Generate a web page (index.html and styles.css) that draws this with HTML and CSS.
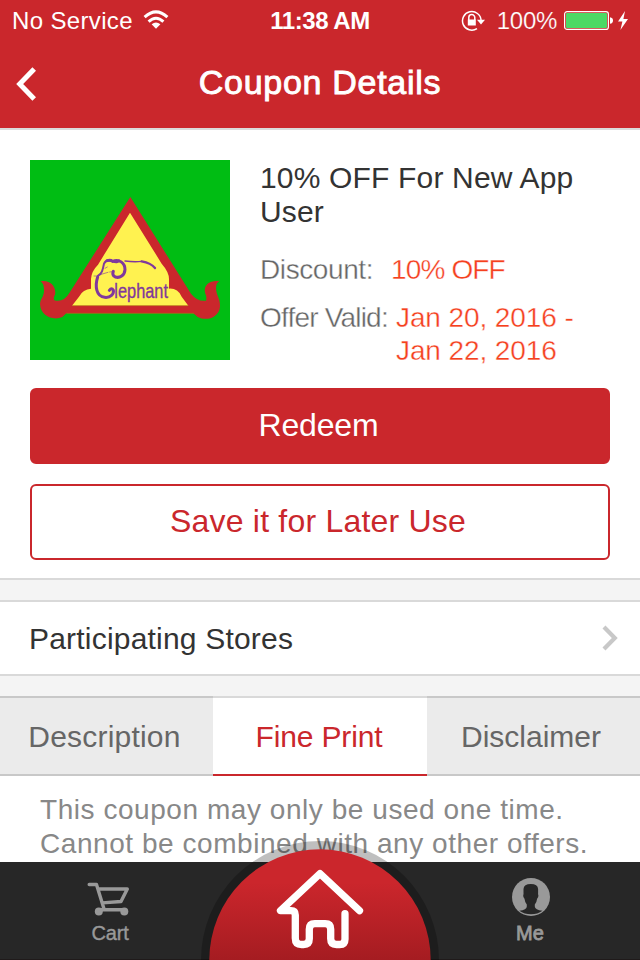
FILE: index.html
```html
<!DOCTYPE html>
<html lang="en">
<head>
<meta charset="utf-8">
<title>Coupon Details</title>
<link rel="stylesheet" href="styles.css">
</head>
<body>
<div class="phone">
  <header class="header">
    <div class="status">
      <div class="status-left">
        <span class="carrier">No Service</span>
        <svg class="wifi" width="26" height="20" viewBox="0 0 26 20" fill="none" stroke="#fff" stroke-width="3">
          <path d="M1.6 7.2Q13-3.6 24.4 7.2"/>
          <path d="M5.6 11.6Q13 4.8 20.4 11.6"/>
          <path d="M8.6 14.3Q13 10.6 17.4 14.3L13 18.8Z" fill="#fff" stroke="none"/>
        </svg>
      </div>
      <span class="clock">11:38 AM</span>
      <div class="status-right">
        <svg width="24" height="22" viewBox="0 0 24 22" fill="none" stroke="#fff" stroke-width="1.5">
          <path d="M20.1 10.5A9.3 9.3 0 1 0 16 18.6"/>
          <path d="M16 9.8H24L20 14.4Z" fill="#fff" stroke="none"/>
          <path d="M7.8 10V7.6a3 3 0 0 1 6 0V10"/>
          <path d="M6.8 9.5h8v6h-8Z" fill="#fff" stroke="none"/>
        </svg>
        <span class="percent">100%</span>
        <svg width="66" height="22" viewBox="0 0 66 22">
          <rect x=".6" y="1.6" width="43.8" height="17.8" rx="2.5" fill="none" stroke="#fff" stroke-width="1.2"/>
          <rect x="2" y="3" width="41" height="15" rx="1" fill="#4cd964"/>
          <path d="M46 7.2q3 .5 3 3.3t-3 3.3Z" fill="#fff"/>
          <path d="M61 1 54 11.6h4.4L56.4 20 64 9h-4.6Z" fill="#fff"/>
        </svg>
      </div>
    </div>
    <div class="navbar">
      <svg class="back" width="22" height="34" viewBox="0 0 22 34" fill="none" stroke="#fff" stroke-width="5"><path d="M19.2 2 4.7 17l14.500 15"/></svg>
      <h1>Coupon Details</h1>
    </div>
  </header>

  <section class="coupon">
    <div class="summary">
      <svg class="logo" viewBox="15 15 600 600">
        <path fill="#00bd13" d="M15 15h600v600H15z"/>
        <path fill="#ca272c" d="M316 126 498 416Q518 441 543 437Q546 425 541 416C533 391 555 374 583 379Q570 386 574 409C577 425 586 434 585 455C582 487 545 500 518 486L505 475H124L112 486C85 498 47 484 45 448C46 430 58 425 57 405Q57 386 47 379C75 373 95 395 90 419Q84 428 88 436Q116 444 135 411Z"/>
        <path fill="#fff250" d="M315 173 410 326Q432 351 432 372V401Q458 399 470 425L490 452H141L162 425Q174 402 198 401V372Q199 349 219 329Z"/>
        <path d="M141 452H490M124 475H507" stroke="#b26b18" stroke-width="2"/>
        <g fill="none" stroke="#7f389d" stroke-linecap="round">
          <path stroke-width="6" d="M219 362Q227 359 231 349Q234 342 237 326Q244 311 263 319Q278 326 282 316"/>
          <path stroke-width="9" d="M246 317Q257 314 263 319C282 311 300 323 300 344C299 362 284 370 271 366Q260 360 265 349"/>
          <path stroke-width="4" d="M300 318Q329 322 350 319"/>
          <path stroke-width="7" d="M350 319Q378 324 390 339"/>
          <path stroke-width="9" d="M218 366C209 394 214 425 239 427C257 429 267 417 265 406Q260 397 253 406"/>
          <path stroke-width="3" stroke-opacity=".6" d="M207 363h14M240 340l7-4m-22 23 24-7m5-1 7-1"/>
        </g>
        <text class="logo-text" x="268" y="429" textLength="161" lengthAdjust="spacingAndGlyphs">lephant</text>
      </svg>
      <div class="info">
        <h2>10% OFF For New App User</h2>
        <div class="field"><span class="label discount">Discount:</span><span class="value off">10% OFF</span></div>
        <div class="field valid"><span class="label offer">Offer Valid:</span><span class="value">Jan 20, 2016 -<br>Jan 22, 2016</span></div>
      </div>
    </div>
    <div class="button primary">Redeem</div>
    <div class="button outline">Save it for Later Use</div>
  </section>

  <section class="stores">
    <span>Participating Stores</span>
    <svg width="18" height="26" viewBox="0 0 18 26" fill="none" stroke="#c8c8c8" stroke-width="4.2"><path d="M2 2 12.800 13 2 24"/></svg>
  </section>

  <nav class="tabs">
    <div class="tab description">Description</div>
    <div class="tab active">Fine Print</div>
    <div class="tab disclaimer">Disclaimer</div>
  </nav>
  <div class="print">This coupon may only be used one time.<br>Cannot be combined with any other offers.</div>

  <footer class="bottom">
    <div class="item cart">
      <svg width="44" height="36" viewBox="0 0 44 36" fill="none" stroke="#999" stroke-width="3.4" stroke-linecap="round" stroke-linejoin="round">
        <path d="M2.2 3.500h7.300l7.300 23.700M12 8h28.300L34 20.500l-18.500 1.400M13 28.800h25"/>
        <circle cx="11.800" cy="30.500" r="4" fill="#999" stroke="none"/><circle cx="37.300" cy="30.500" r="4" fill="#999" stroke="none"/>
      </svg>
      <span>Cart</span>
    </div>
    <div class="item me">
      <svg width="40" height="40" viewBox="0 0 40 40">
        <circle cx="20" cy="20" r="19" fill="#999"/>
        <path fill="#272727" d="M8.300 33.800Q15.800 32.800 15.800 29.500V27.500Q13.800 25 13.500 21.800Q12 21 12.200 18Q12.800 17.500 12.500 16V12Q12.800 7 19.800 7T27.100 12V16Q26.800 17.500 27.400 18Q27.600 21 26.100 21.800Q25.800 25 23.800 27.500V29.500Q24 32.800 31.500 33.800Q26.500 37.300 20 37.300T8.300 33.800Z"/>
      </svg>
      <span>Me</span>
    </div>
    <div class="home">
      <svg viewBox="0 0 240 120" width="240" height="120">
        <defs><linearGradient id="red" x1="0" y1="0" x2="0" y2="1"><stop offset=".3" stop-color="#cb262c"/><stop offset="1" stop-color="#a51c21"/></linearGradient></defs>
        <circle cx="120" cy="120" r="119" fill="#000" fill-opacity=".25"/>
        <path d="M9.300 120a110.700 110.700 0 0 1 221.400 0Z" fill="url(#red)"/>
        <path transform="translate(0 1.2)" d="M159.500 69.500 120 32.500 80.500 69.500H91q4.300 0 4.300 4.300V97q0 6.300 6.300 6.300h2q5.700 0 5.700-5.700V88q0-5.500 5.500-5.500h10.400q5.500 0 5.500 5.500v9.600q0 5.700 5.700 5.700h3.300q5.300 0 5.300-5.300V72.500" fill="none" stroke="#fff" stroke-width="7.300" stroke-linecap="round" stroke-linejoin="round"/>
      </svg>
    </div>
  </footer>
</div>
</body>
</html>
```
FILE: styles.css
```css
* { box-sizing: border-box; }
body { margin: 0; font-family: "Liberation Sans", Arial, sans-serif; background: #fff; }
.phone { width: 640px; height: 960px; display: flex; flex-direction: column; overflow: hidden; background: #f4f4f4; }
.phone > * { flex-shrink: 0; }
h1, h2 { margin: 0; font-weight: 400; }

.header { height: 130px; background: #ca272c; border-bottom: 2px solid #dbdbdb; color: #fff; }
.status { height: 40px; display: grid; grid-template-columns: 1fr auto 1fr; align-items: center; font-size: 24px; line-height: 40px; padding: 1px 11px 0 12px; }
.status-left, .status-right { display: flex; align-items: center; height: 40px; }
.carrier { letter-spacing: .35px; }
.wifi { margin-left: 10px; margin-top: -2px; }
.clock { font-weight: 700; letter-spacing: -.45px; margin-right: 1px; }
.status-right { justify-content: flex-end; }
.status-right svg { margin-top: -1px; }
.status-right svg:last-child { margin-right: -1px; }
.percent { margin: 0 7px 0 12px; letter-spacing: -.3px; -webkit-text-stroke: .2px #ca272c; }
.navbar { height: 88px; display: grid; grid-template-columns: 40px 1fr 40px; align-items: center; padding: 0 13px 0 15px; }
.navbar h1 { font-size: 34px; line-height: 40px; text-align: center; letter-spacing: .7px; margin-top: -4px; margin-right: 2px; -webkit-text-stroke: .9px #fff; }

.coupon { height: 450px; padding: 30px 30px 0; background: #fff; border-bottom: 2px solid #d9d9d9; }
.summary { display: flex; gap: 30px; height: 228px; }
.logo { width: 200px; height: 200px; flex: none; }
.logo-text { font-family: "Liberation Sans", sans-serif; font-size: 62px; fill: #7f389d; stroke: #7f389d; stroke-width: 1; }
.info { padding-top: 1px; flex: 1; }
h2 { font-size: 30px; line-height: 34px; color: #333; letter-spacing: .17px; width: 320px; margin-bottom: 24px; }
.field { display: flex; font-size: 28px; line-height: 33px; -webkit-text-stroke: .35px #fff; }
.label { color: #666; }
.value { color: #f5401e; white-space: nowrap; letter-spacing: -.1px; }
.discount { width: 131px; letter-spacing: -.4px; }
.off { letter-spacing: -.85px; }
.valid { margin-top: 15px; }
.offer { width: 136px; letter-spacing: -.8px; white-space: nowrap; }
.button { height: 76px; display: flex; align-items: center; justify-content: center; font-size: 32px; border-radius: 6px; padding: 0 4px 2px 0; border: 2px solid #ca272c; }
.primary { background: #ca272c; color: #fff; padding-right: 3px; letter-spacing: -.2px; }
.outline { margin-top: 20px; color: #ca272c; letter-spacing: .2px; }

.stores { height: 76px; margin: 20px 0; padding: 1px 20px 0 29px; background: #fff; border-top: 2px solid #d9d9d9; border-bottom: 2px solid #d9d9d9; display: flex; justify-content: space-between; align-items: center; font-size: 30px; color: #333; letter-spacing: .2px; }
.stores svg { margin-top: -1px; }

.tabs { height: 80px; display: grid; grid-template-columns: 213px 214px 213px; }
.tab { background: #ebebeb; border-top: 2px solid #c8c8c8; border-bottom: 2px solid #c8c8c8; display: flex; align-items: center; justify-content: center; font-size: 30px; color: #666; letter-spacing: 0; padding-top: 2px; }
.description { letter-spacing: .2px; padding-right: 4px; }
.disclaimer { padding-right: 5px; }
.active { background: #fff; color: #ca272c; border-top-color: #d9d9d9; border-bottom-color: #ca272c; letter-spacing: -.15px; padding-right: 2px; }
.print { height: 86px; padding: 17px 0 0 40px; background: #fff; font-size: 28px; line-height: 34px; color: #888; letter-spacing: .55px; white-space: nowrap; }

.bottom { height: 98px; background: #272727; position: relative; display: flex; justify-content: space-between; border-bottom: 1px solid #1f1a1a; color: #999; font-size: 20px; line-height: 24px; }
.item { width: 220px; display: flex; flex-direction: column; align-items: center; -webkit-text-stroke: .4px #999; }
.cart { padding-top: 19px; }
.cart svg { margin-right: 2px; }
.cart span { margin-top: 4px; letter-spacing: -.2px; }
.me { padding-top: 15px; }
.me svg { margin-right: -1px; }
.me span { margin-top: 4px; -webkit-text-stroke-width: .8px; }
.home { position: absolute; left: 200px; bottom: -1px; width: 240px; height: 120px; overflow: hidden; }
.home svg { display: block; }
```
